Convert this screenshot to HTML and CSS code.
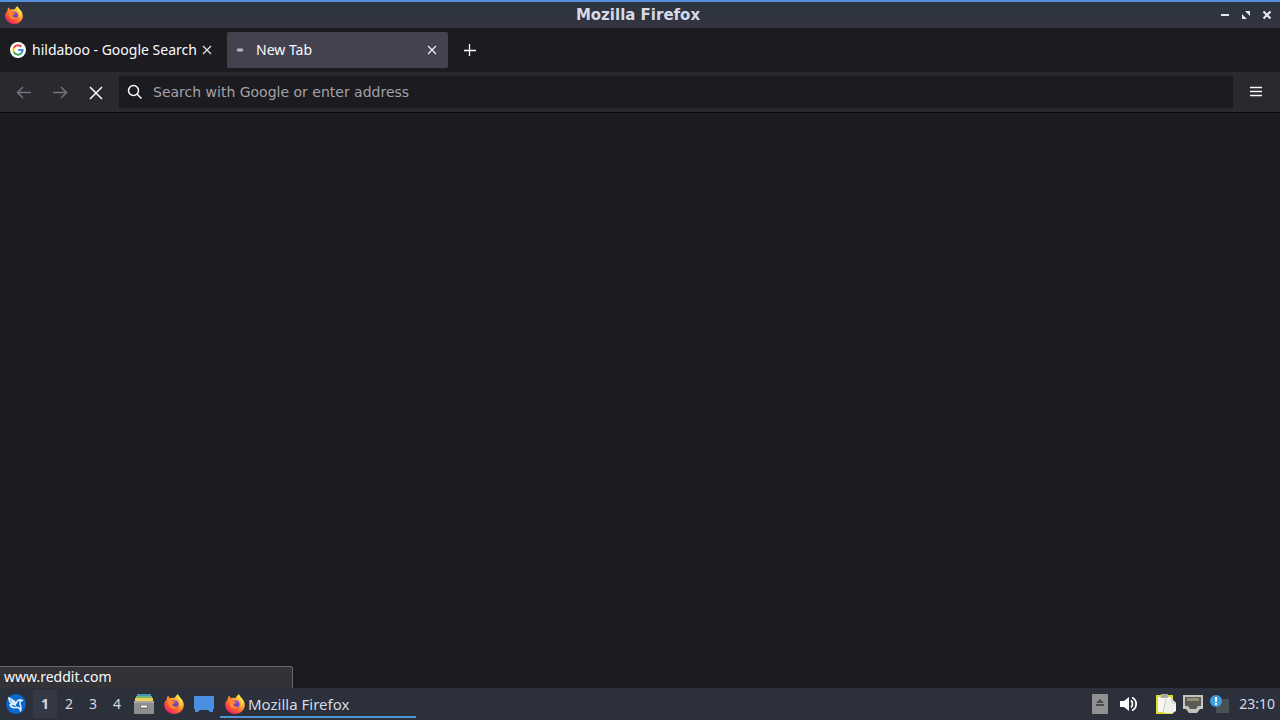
FILE: index.html
```html
<!DOCTYPE html>
<html lang="en">
<head>
<meta charset="utf-8">
<title>Mozilla Firefox</title>
<link rel="stylesheet" href="styles.css">
</head>
<body>
<svg class="defs" width="0" height="0" aria-hidden="true">
  <defs>
    <linearGradient id="flame" x1="0.85" y1="0.1" x2="0.2" y2="0.9">
      <stop offset="0" stop-color="#fff04a"/><stop offset="0.35" stop-color="#ffa52e"/>
      <stop offset="0.7" stop-color="#ff5a38"/><stop offset="1" stop-color="#ec2465"/>
    </linearGradient>
    <linearGradient id="globe" x1="0" y1="0" x2="0" y2="1">
      <stop offset="0" stop-color="#a04ad6"/><stop offset="1" stop-color="#5a3fb5"/>
    </linearGradient>
    <symbol id="firefox" viewBox="0 0 20 20">
      <path d="M2.500 6C2.500 4 3.500 2.500 4.200 1.500L5.600 4.200C7 3.600 8.500 3.500 10 4C11.500 3.500 11.500 1.500 14 0C14.500 3 19.800 5 19.800 11C19.800 16 15.500 19.900 10 19.900C4.500 19.900 .2 16 .2 10.500C.2 8.500 1 7 2.500 6Z" fill="url(#flame)"/>
      <circle cx="10.500" cy="10.300" r="4" fill="url(#globe)"/>
      <path d="M4 7C6 5.800 8 6.200 9 7.400L11.500 8C11 9.200 9 9.300 8.500 10.500C8.500 12.500 11 13.400 14 12C12.500 15 8 15.500 5.500 13C4.200 11.500 4.400 9 4 7Z" fill="#ff8a26"/>
      <path d="M13 3C15.500 6 17.500 9 15.500 13C19.500 10 18 5.500 14 1.500Z" fill="#ffe34a"/>
    </symbol>
  </defs>
</svg>

<header class="titlebar">
  <svg class="title-logo" aria-hidden="true"><use href="#firefox"/></svg>
  <h1 class="title">Mozilla Firefox</h1>
  <div class="window-buttons">
    <button class="window-button" aria-label="Minimize"><svg width="10" height="10" viewBox="0 0 10 10"><path d="M1 5H9" stroke="#e4e7ef" stroke-width="2"/></svg></button>
    <button class="window-button" aria-label="Restore"><svg width="10" height="10" viewBox="0 0 10 10"><path d="M4 1H9V6ZM1 4V9H6Z" fill="#e4e7ef"/></svg></button>
    <button class="window-button" aria-label="Close window"><svg width="10" height="10" viewBox="0 0 10 10"><path d="M1.500 1.500L8.500 8.500M8.500 1.500L1.500 8.500" stroke="#e4e7ef" stroke-width="2.200"/></svg></button>
  </div>
</header>

<nav class="tabs" aria-label="Tabs">
  <div class="tab">
    <svg class="tab-icon" viewBox="0 0 16 16" aria-hidden="true">
      <circle cx="8" cy="8" r="8" fill="#fff"/>
      <g fill="none" stroke-width="2">
        <path d="M11.400 4.800A4.700 4.700 0 0 0 3.900 5.700" stroke="#ea4335"/>
        <path d="M3.900 5.700A4.700 4.700 0 0 0 3.900 10.300" stroke="#fbbc05"/>
        <path d="M3.900 10.300A4.700 4.700 0 0 0 11 11.600" stroke="#34a853"/>
        <path d="M11 11.600A4.700 4.700 0 0 0 12.600 8H8.200" stroke="#4285f4"/>
      </g>
    </svg>
    <span class="tab-label">hildaboo - Google Search</span>
    <button class="tab-close" aria-label="Close tab"><svg width="10" height="10" viewBox="0 0 10 10"><path d="M1 1L9 9M9 1L1 9" stroke="#e6e6ec" stroke-width="1.200"/></svg></button>
  </div>
  <div class="tab active">
    <svg class="loading" width="8" height="4" viewBox="0 0 8 4" aria-hidden="true"><rect x="1" y="0.500" width="6" height="3" rx="1" fill="#b9b8c4"/></svg>
    <span class="tab-label">New Tab</span>
    <button class="tab-close" aria-label="Close tab"><svg width="10" height="10" viewBox="0 0 10 10"><path d="M1 1L9 9M9 1L1 9" stroke="#f0f0f5" stroke-width="1.200"/></svg></button>
  </div>
  <button class="new-tab" aria-label="Open a new tab"><svg width="12" height="12" viewBox="0 0 12 12"><path d="M5.500 0V12M0 6.500H12" stroke="#fbfbfe" stroke-width="1.300"/></svg></button>
</nav>

<div class="toolbar">
  <button class="tool dim" aria-label="Back"><svg width="16" height="16" viewBox="0 0 16 16"><path d="M15 8.500H1.500M7 3L1.500 8.500L7 14"/></svg></button>
  <button class="tool dim" aria-label="Forward"><svg width="16" height="16" viewBox="0 0 16 16"><path d="M1 8.500H14.500M9 3L14.500 8.500L9 14"/></svg></button>
  <button class="tool" aria-label="Stop"><svg width="16" height="16" viewBox="0 0 16 16"><path d="M2 3L14 15M14 3L2 15"/></svg></button>
  <div class="address">
    <svg width="16" height="16" viewBox="0 0 16 16" aria-hidden="true"><circle cx="6.500" cy="6.500" r="5"/><path d="M10.200 10.200L14.500 14.500"/></svg>
    <input class="address-input" type="text" aria-label="Address" placeholder="Search with Google or enter address">
  </div>
  <button class="tool menu" aria-label="Menu"><svg width="12" height="12" viewBox="0 0 12 12"><path d="M0 1.500H12M0 5.500H12M0 9.500H12"/></svg></button>
</div>

<main class="page">
  <div class="status">www.reddit.com</div>
</main>

<footer class="taskbar">
  <button class="launcher" aria-label="Applications">
    <svg width="20" height="20" viewBox="0 0 20 20"><circle cx="10" cy="10" r="10" fill="#0868cf"/><g fill="none" stroke="#dcecff" stroke-width="1.600" stroke-linecap="round" stroke-linejoin="round"><path d="M3 4C6 5.500 8.500 7 10 9.500C11 6.500 13 5 16.500 6.500C14 7 13.500 8 14 10C14.500 12 16 14 14.500 17"/><path d="M3 4C3 7 4 9 7 10.500L4 10.800C5 13 7 14 9.500 13.500C12 13 13.500 14 14.500 16"/></g><path d="M4 5L10 9.500V12L7 11Z" fill="#dcecff"/></svg>
  </button>
  <div class="desktops">
    <button class="desktop current">1</button>
    <button class="desktop">2</button>
    <button class="desktop">3</button>
    <button class="desktop">4</button>
  </div>
  <button class="launcher" aria-label="Files">
    <svg width="20" height="22" viewBox="0 0 20 22"><path d="M3 1H17V4H3Z" fill="#4199b5"/><path d="M2 3H18V6H2Z" fill="#70bd7b"/><path d="M1 5H19V9H1Z" fill="#f0cf58"/><path d="M0 8H20V21H0Z" fill="#8e8e8e"/><path d="M0 8H20V10H0Z" fill="#a6a6a6"/><rect x="6" y="12" width="8" height="4" rx="1" fill="#717171"/><path d="M7 13.500H13" stroke="#fff" stroke-width="2"/></svg>
  </button>
  <button class="launcher" aria-label="Firefox"><svg width="20" height="20"><use href="#firefox"/></svg></button>
  <button class="launcher" aria-label="Show desktop">
    <svg width="20" height="18" viewBox="0 0 20 18"><path d="M0 1H20V14H19V17H16L14 15H6L4 17H1V14H0Z" fill="#4a90e2"/></svg>
  </button>
  <button class="task">
    <svg width="20" height="20" aria-hidden="true"><use href="#firefox"/></svg>
    <span>Mozilla Firefox</span>
  </button>
  <div class="tray">
    <svg width="16" height="20" viewBox="0 0 16 20" role="img" aria-label="Removable media"><path d="M0 0H16V20H0Z" fill="#929292"/><path d="M4 9L8 5L12 9ZM4 10H12V12H4Z" fill="#4b4b50"/></svg>
    <svg class="volume" width="18" height="16" viewBox="0 0 18 16" role="img" aria-label="Volume"><path d="M0 5H4L9 1V15L4 11H0Z" fill="#fff"/><path d="M11 4.500C13 6 13 10 11 11.500M12 1.500C17.500 4 17.500 12 12 14.500" fill="none" stroke="#fff" stroke-width="1.800"/></svg>
    <svg class="clipboard" width="20" height="22" viewBox="0 0 20 22" role="img" aria-label="Clipboard"><path d="M0 2H17V21H0Z" fill="#dcdc32"/><path d="M2 4H15V19H2Z" fill="#f7f7f2"/><path d="M5 1H12V5H5Z" fill="#aaa"/><path d="M10 6H16L20 10V18L17 20H7Z" fill="#f1f1ee"/><path d="M10 6L7 20M16 6V10H20" fill="none" stroke="#c9c9c4"/></svg>
    <svg class="network" width="20" height="18" viewBox="0 0 20 18" role="img" aria-label="Network"><path d="M0 0H20V14H17L14 18H6L3 14H0Z" fill="#c4c4be"/><path d="M2 2H18V11H15L13 14H7L5 11H2Z" fill="#5b5b56"/><path d="M5 3V6M7 3V6M9 3V6M11 3V6M13 3V6M15 3V6" stroke="#cbc38a"/></svg>
    <svg class="updates" width="20" height="20" viewBox="0 0 20 20" role="img" aria-label="Updates"><path d="M6 5H19V19H6Z" fill="#4a5154"/><circle cx="6" cy="7" r="6" fill="#3c9ce0"/><path d="M6 3V8M6 9V11" stroke="#fff" stroke-width="2"/></svg>
    <time class="clock">23:10</time>
  </div>
</footer>
</body>
</html>
```
FILE: styles.css
```css
* { box-sizing: border-box; }
body {
  margin: 0;
  min-height: 100vh;
  display: flex;
  flex-direction: column;
  background: #1c1b20;
  color: #fbfbfe;
  font: 14px/20px "Noto Sans", sans-serif;
}
button {
  display: flex;
  align-items: center;
  justify-content: center;
  padding: 0;
  border: 0;
  background: none;
  color: inherit;
  font: inherit;
}
svg { flex: none; }
.defs { position: absolute; }

.titlebar {
  display: grid;
  grid-template-columns: 1fr auto 1fr;
  align-items: center;
  height: 28px;
  padding: 0 8px 0 4px;
  border-top: 2px solid #5690da;
  background: linear-gradient(#2d3541, #33343f);
}
.title-logo { width: 20px; height: 18px; }
.title {
  margin: 0;
  color: #d5dae6;
  font: bold 15px/20px "DejaVu Sans", sans-serif;
}
.window-buttons { display: flex; justify-content: flex-end; gap: 11px; }
.window-button { width: 10px; height: 20px; }

.tabs { display: flex; align-items: center; height: 44px; }
.tab {
  display: flex;
  align-items: center;
  width: 227px;
  height: 36px;
  padding: 0 15px 0 10px;
}
.tab-icon { width: 16px; height: 16px; margin-right: 6px; }
.tab-label { flex: 1; white-space: nowrap; }
.tab-close { width: 10px; height: 20px; }
.tab.active {
  width: 221px;
  padding: 0 11px 0 9px;
  border-radius: 2px;
  background: #44424f;
}
.loading { margin-right: 12px; }
.new-tab { width: 32px; height: 32px; margin-left: 6px; }

.toolbar {
  display: flex;
  align-items: center;
  height: 41px;
  padding: 0 8px 0 6px;
  border-bottom: 1px solid #08080b;
  background: #2a292f;
}
.tool { width: 36px; height: 32px; }
.tool svg, .address svg { fill: none; stroke: #fbfbfe; stroke-width: 1.5; }
.tool.dim svg { stroke: #74737b; }
.tool.menu { width: 32px; margin-left: 7px; }
.address {
  display: flex;
  flex: 1;
  align-items: center;
  gap: 10px;
  height: 32px;
  margin-left: 5px;
  padding: 0 8px;
  background: #1c1b20;
}
.address-input {
  flex: 1;
  min-width: 0;
  padding: 0;
  border: 0;
  outline: 0;
  background: none;
  color: inherit;
  font: 14px/20px "DejaVu Sans", sans-serif;
}
.address-input::placeholder { color: #a3a2a8; opacity: 1; }

.page { display: flex; flex: 1; align-items: flex-end; }
.status {
  width: 293px;
  height: 22px;
  padding: 0 4px;
  border-top: 1px solid #67666c;
  border-right: 1px solid #67666c;
  border-top-right-radius: 3px;
  background: #333236;
}

.taskbar {
  display: flex;
  align-items: center;
  height: 32px;
  padding: 0 5px 0 1px;
  background: #2b303b;
  color: #d5dae6;
}
.launcher { width: 30px; height: 32px; }
.desktops { display: flex; margin-left: 2px; }
.desktop { width: 24px; height: 28px; }
.desktop.current { background: #343945; font-weight: bold; }
.task {
  justify-content: flex-start;
  gap: 3px;
  width: 196px;
  height: 28px;
  margin-left: 1px;
  padding: 2px 0 0 5px;
  border-bottom: 2px solid #5294d2;
  font-size: 15px;
}
.tray { display: flex; flex: 1; align-items: center; justify-content: flex-end; }
.volume { margin-left: 12px; }
.clipboard { margin-left: 18px; }
.network { margin-left: 7px; }
.updates { margin: 0 9px 0 7px; }
```
